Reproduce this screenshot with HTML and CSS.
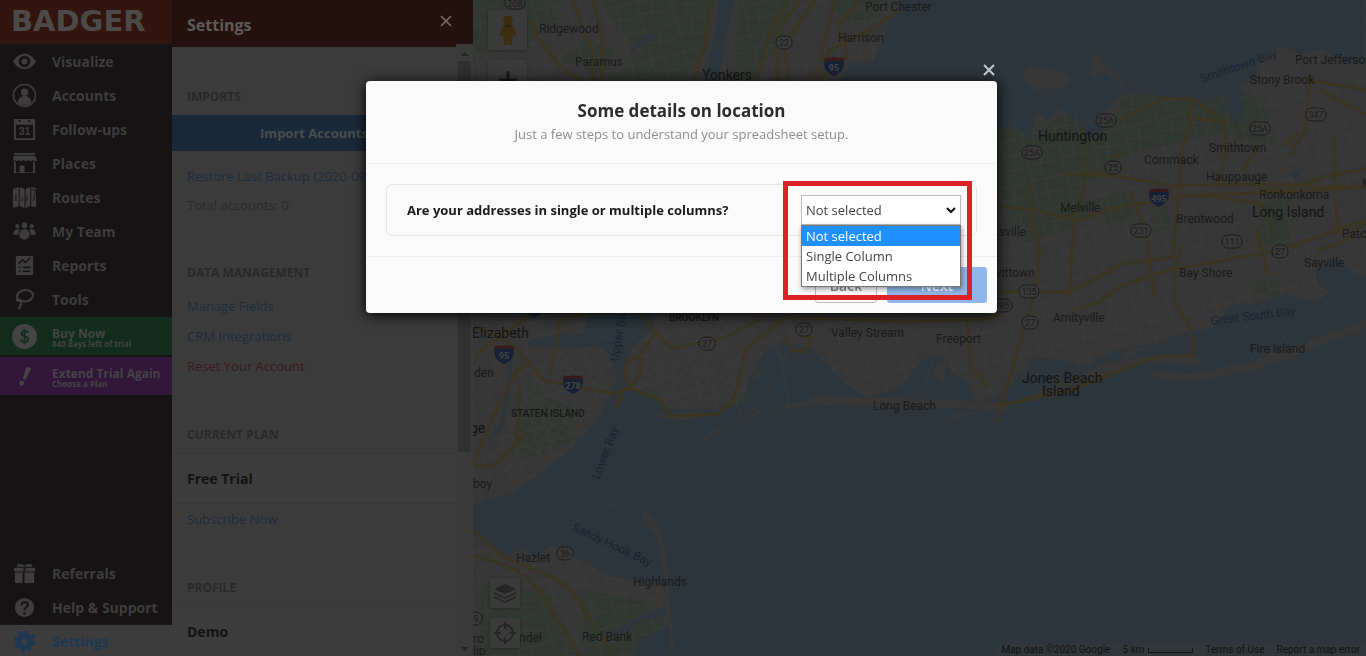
FILE: index.html
```html
<!DOCTYPE html>
<html lang="en">
<head>
    <meta charset="UTF-8">
    <meta name="viewport" content="width=device-width, initial-scale=1.0">
    <title>Badger - Settings</title>
    <link rel="stylesheet" href="styles.css">
</head>
<body>
    <div class="app">
        <nav class="sidebar">
            <a href="#" class="logo">BADGER</a>
            <div class="menu">
                <a href="#" class="menu-item">
                    <svg class="icon" viewBox="0 0 26 26"><path fill-rule="evenodd" d="M1 13C5 7 9 5 13 5s8 2 12 8c-4 6-8 8-12 8S5 19 1 13zm12-6a6 6 0 1 0 0 12 6 6 0 0 0 0-12zm0 3a3 3 0 1 1 0 6 3 3 0 0 1 0-6z"/></svg>
                    Visualize
                </a>
                <a href="#" class="menu-item">
                    <svg class="icon" viewBox="0 0 26 26"><circle cx="13" cy="13" r="11.5" fill="none" stroke="currentColor" stroke-width="1.6"/><circle cx="13" cy="9.500" r="3.800"/><path d="M6 21c0-5 3-7.500 7-7.500s7 2.500 7 7.500c-4 3-10 3-14 0z"/></svg>
                    Accounts
                </a>
                <a href="#" class="menu-item">
                    <svg class="icon" viewBox="0 0 26 26"><path fill-rule="evenodd" d="M2 2h22v22H2zM4 8v14h18V8zM7 3v2h2V3zm10 0v2h2V3z"/><text class="icon-date" x="13" y="19" text-anchor="middle">31</text></svg>
                    Follow-ups
                </a>
                <a href="#" class="menu-item">
                    <svg class="icon" viewBox="0 0 26 26"><path d="M2 2h22v2H2zM2 5h22l2 4c0 2-3 2-4 0-1 2-4 2-5 0-1 2-4 2-5 0-1 2-4 2-5 0-1 2-3 2-4 0-1 2-3 1-2 0zM2 11h2v11h4v-7h5v7h9V11h2v12H2z"/></svg>
                    Places
                </a>
                <a href="#" class="menu-item">
                    <svg class="icon" viewBox="0 0 26 26"><path d="M1 4l6-2v20l-6 2zM8 2l5 2v20l-5-2zM14 4l5-2v20l-5 2zM20 2l5 1v20l-5-1z"/><path d="M4 9v8M11 13l-1 4M16 11l-1 6M21 5h3v6l-2 6" fill="none" stroke="#171516"/></svg>
                    Routes
                </a>
                <a href="#" class="menu-item">
                    <svg class="icon" viewBox="0 0 26 26"><circle cx="13" cy="6.500" r="3"/><circle cx="5.500" cy="7.500" r="2.200"/><circle cx="20.500" cy="7.500" r="2.200"/><ellipse cx="13" cy="16" rx="5.500" ry="5.500"/><path d="M8 11c-4-1-7 1-6.500 5L6 17zM18 11c4-1 7 1 6.500 5L20 17z"/></svg>
                    My Team
                </a>
                <a href="#" class="menu-item">
                    <svg class="icon" viewBox="0 0 26 26"><rect x="4" y="3" width="18" height="20" rx="1"/><path d="M7 11l4-4 3 3 5-5M7 15h2m2 0h8M7 19h2m2 0h8" fill="none" stroke="#171516" stroke-width="1.700"/></svg>
                    Reports
                </a>
                <a href="#" class="menu-item">
                    <svg class="icon" viewBox="0 0 26 26"><path d="M9 14c-4-1-5-5-2-8s9-4 13-1 1 9-5 10c-3 .5-5-.5-6-1zm-3-3c-2 3 0 5 3 3 1 3 0 6-2 9" fill="none" stroke="currentColor" stroke-width="2.200"/></svg>
                    Tools
                </a>
            </div>
            <div class="offers">
                <a href="#" class="offer buy">
                    <svg class="icon" viewBox="0 0 26 26"><circle cx="13" cy="13" r="13"/><path d="M17 9c-1-2-7-2.500-7 .8 0 4 7 2 7 6 0 3.500-7 3.500-8 .4M13 5v16" fill="none" stroke="#122d1d" stroke-width="1.900"/></svg>
                    <span>Buy Now<small>840 days left of trial</small></span>
                </a>
                <a href="#" class="offer extend">
                    <svg class="icon" viewBox="0 0 26 26"><path d="M15 3l5 1.500-6 12-3-1zM10 17.500a2.500 2.500 0 1 1 0 5 2.500 2.500 0 0 1 0-5z"/></svg>
                    <span>Extend Trial Again<small>Choose a Plan</small></span>
                </a>
            </div>
            <div class="menu menu-bottom">
                <a href="#" class="menu-item">
                    <svg class="icon" viewBox="0 0 26 26"><path d="M2 7h10v4H2zM14 7h10v4H14zM3 12h8v11H3zM13 12h10v11H13zM5 6c0-4 5-4 8-1 3-3 8-3 8 1z"/></svg>
                    Referrals
                </a>
                <a href="#" class="menu-item">
                    <svg class="icon" viewBox="0 0 26 26"><circle cx="13" cy="13" r="10"/><path d="M10 11c0-5 7-4.500 6.500-.5C16 13 13 13 13 16M13 18v2.200" fill="none" stroke="#171516" stroke-width="2.200"/></svg>
                    Help &amp; Support
                </a>
                <a href="#" class="menu-item active">
                    <svg class="icon" viewBox="0 0 26 26"><circle cx="13" cy="13" r="6" fill="none" stroke="currentColor" stroke-width="5"/><circle cx="13" cy="13" r="9.500" fill="none" stroke="currentColor" stroke-width="4" stroke-dasharray="4 3.460"/></svg>
                    Settings
                </a>
            </div>
        </nav>

        <aside class="panel">
            <header class="panel-header">
                <h1>Settings</h1>
                <button type="button" class="panel-close" aria-label="Close settings">
                    <svg viewBox="0 0 12 12"><path d="M1 1l10 10M11 1L1 11"/></svg>
                </button>
            </header>
            <div class="panel-content">
                <h2 class="imports">Imports</h2>
                <button type="button" class="import">Import Accounts</button>
                <a href="#" class="link">Restore Last Backup (2020-09-01)</a>
                <p class="total">Total accounts: 0</p>
                <h2>Data Management</h2>
                <a href="#" class="link">Manage Fields</a>
                <a href="#" class="link">CRM Integrations</a>
                <a href="#" class="link danger">Reset Your Account</a>
                <h2>Current Plan</h2>
                <div class="row">Free Trial</div>
                <a href="#" class="link">Subscribe Now</a>
                <h2>Profile</h2>
                <div class="row">Demo</div>
            </div>
            <div class="scrollbar">
                <svg viewBox="0 0 8 5"><path d="M0 5l4-4 4 4z"/></svg>
                <div class="thumb"></div>
                <svg viewBox="0 0 8 5"><path d="M0 0l4 4 4-4z"/></svg>
            </div>
        </aside>

        <main class="map">
            <svg class="map-canvas" viewBox="473 0 893 656" preserveAspectRatio="xMinYMin slice">
                <defs>
                    <pattern id="streets" width="34" height="30" patternUnits="userSpaceOnUse" patternTransform="rotate(-14)">
                        <path d="M0 6h34M6 0v30M20 6l-3 24M6 18l28 4" class="street"/>
                    </pattern>
                    <pattern id="blocks" width="9" height="8" patternUnits="userSpaceOnUse" patternTransform="rotate(28)">
                        <path d="M0 3h9M3 0v8" class="street"/>
                    </pattern>
                    <g id="interstate">
                        <path d="M-9-7c3-2 6 1 9-1 3 2 6-1 9 1C12 2 7 7 0 10-7 7-12 2-9-7z" fill="#162136"/>
                        <path d="M-9-8c3-1 6 1 9-1 3 2 6 0 9 1l1 3h-20z" fill="#371b1c"/>
                    </g>
                </defs>
                <rect x="473" width="893" height="656" class="land"/>
                <!-- parks -->
                <g class="park">
                    <path d="M473 0h75l10 20-35 25-50 10zM600 0h115l-8 50-28 31h-65l30-30-22-20zM740 0h60l-20 40-26 40h-18zM830 0h60l-25 25-20-5zM560 60l25-20 30 10-10 25z"/>
                    <path d="M997 128l40 5 30-20 40 15 25-48 60 12 65 5-30 38-90 15-60 40-80-5z"/>
                    <path d="M1000 190l45-10 55 22-25 25-48 15zM1095 200l30-12 10 30-25 12zM1158 212l11-7v22l-11 5zM1262 208l22-10 8 48-32-1zM1260 278l25 4-10 15-20-6zM1240 90l25 20 10 35-35-5-20-35z"/>
                    <path d="M520 420l25-22 30 8-5 35-40 18-20-10zM525 390l10-8 8 14-12 4zM727 400l8-15 10 14-8 14-12 2zM580 590l60 10 28 25v30h-80zM480 585l70 10 30 60H480z"/>
                </g>
                <rect x="473" width="893" height="656" fill="url(#streets)"/>
                <path d="M630 313h130l-10 90-85 5-50-20z" fill="url(#blocks)"/>
                <path d="M550 352l35-3 25 38-40 50-60 40-20-20z" fill="url(#blocks)"/>
                <!-- water -->
                <g class="water">
                    <path d="M904 0l-12 15-8 22-10 24-24 3-10 17v30h157v19l18-4 15 14 6-28 12 8 13-12 14 12 10 22 18-12 2-20 14-15 35-1 30 8 25-2 16-6 8 15 2 18 8-15-4-26 16-6 3-22 23-12 20 8 22-5 20 14h20V0z"/>
                    <path d="M718 0h17l-10 40-6 41h-15l10-41zM630 48l20-16 6 4-24 16zM1220 105l10-6 8 8 3 12-8-2zM1290 174l6-4 4 3-4 8z"/>
                    <path d="M590 313h60l4 14-23 22-9 24 5 14 27 8 12 14 56 1 22-6 4-24 18-30 16-8 27 6 34 34 25 16 34-12 20-26 18-6 12 18 15 12 10 18 29-8 18-30 15-7 48 8 33-16 34-5 34-13 23-2 21-24 22-1 32-10 30 8 14-10-12-8-3-13 23-12 18 16 24 6 36-8 11-16v415H674l-3-56-8-30-23-6-28-3-38-20-22-12-16 13-14-11-18 12-14-12-17-12v-30l45-15 50-38 28-30 14-24 8-22-15-30-50 2-30-4 25-8 35-2z"/>
                    <path d="M610 635l20-14 20-10 20-6-3 10-28 6-16 14zM640 640l28-14 5 30h-38zM488 440l12-16 6-34 4-38 3 1-3 40-7 36-13 14z"/>
                </g>
                <!-- islands and barrier beaches -->
                <g class="land">
                    <path d="M1028 65l17 2 18 5 8 8-10 8-28 2-10-10zM1090 58l8-6 7 12 22 20-5 1-18-14-13 8z"/>
                    <path d="M700 442l10-10 60-22 50-14 135 4 55 3-2 7-60-2-130-2-60 4-50 28zM950 415l50-7 110-46 48-7 45 3-4 7-50-3-90 28-30 10-79 20zM1150 371l40 3 60-12 116-42v8l-108 42-68 12-32-3zM642 512l5-1 12 15 7 25 3 40 5 55-3 10-5-60-8-58-16-20zM650 415l50-4 15 4-35 6z"/>
                    <path d="M752 376l10-8-2 12zM780 358l8-5-2 12zM768 390l6-2v6zM1005 360l16-4 8 12-10 8zM1048 380l10-7 4 5-7 7zM1075 365l9-5-2 9zM1120 356l15-10 12 2-20 10zM990 378l14-5 8 11-14 10zM890 378l14-5-5 14zM930 370l18-10-5 25zM870 386l10-12 4 14z"/>
                </g>
                <g class="minor">
                    <path d="M773 325l8 35 8 45M845 335l7 40M850 395l40-65 30-17M722 375l24 49M497 360l-13 55M1192 350v20M1134 85l-30-25M925 385l20-60"/>
                    <path d="M473 85l80-70 60-15M480 60l60 18 60-62M640 81l40-50-12-31M760 40l38 41M1003 140l30 40 60-10 100 20 60-10M1180 110l20 60 60-20 60 20 46-10M1110 150l-10 60-20 60 10 50M1210 120l-30 130M1320 100l-10 200M1075 115l10 38 30 30M510 610l60-10 60 20 40-20M560 580l20 76M1260 310l40-80M1056 210l14 80 40 30"/>
                </g>
                <path d="M473 545l150-37 67-38 60 44M888 20l34 33 60-18 160-45M580 345l40-3" class="ferry"/>
                <!-- highways -->
                <g class="highway">
                    <path d="M528 20l15 25 20 25 20 11M572 0l20 52 1 29M593 0l10 40-2 41M710 0l-5 45-12 36M790 0l-18 25-15 56M800 0l-22 30v51M815 0l-30 45 3 36M860 0l-22 25 10 30-30 26M900 10l-30 20-40 20-20 31M835 0l-15 60"/>
                    <path d="M473 325l40 20 30 35 70 14 17-6 30 12 10 16 48-2 16-15 12-50 40-32 120 5 80-3 16-6M630 388l-6-18 6-14 12 4-2 14-10 14M473 356l60-43M473 465l18-44 25-49 15-11M473 466h20l25-23 8-11M516 443l4-60M550 375l10-55 30-8M640 313l15 20 17 15 50-9 45-23M800 335l12 3-9 14-12-2-5-15M966 313l6 55 15 18M657 330l-20 30M625 388l-10 20"/>
                    <path d="M1120 120l45-22 30 2 30 21M1189 97v30l-8 25-4 62-5 43-52 8-30 17-20 10H997M1194 118l30 4 2 30-10 35M1283 147l15-15M1258 145l-15 25M1258 188l30 3 35-14 43-8M1070 176l55-8M1110 160l12-7M1083 127v67l-9 20-5 85M1063 174h20l40 3 50 9 80-2 113 3M997 205l40 5 40 10 40-13 80-12 90-3 79-5M1130 190l15 40 10 68M1028 182l5 45 7 20-5 45-30 100-8 30M1075 310l25-8 20-16 50-16 110-20 86-30M1182 245l-8 25v30l14 25 5 15v16h-35l-90 35-71 15M1200 195l60 8 15 35M1256 230l12 45M1318 250l25-8 23-22M1310 80l55 10M1310 75l-5 55-15 25M1335 135v60l3 40M1320 90l46 25"/>
                    <path d="M473 530l30 27 50 20 20 15 22 35 20 29M473 556l20 5 25 10 20 18 42 67"/>
                </g>
                <!-- shields -->
                <g class="shield">
                    <rect x="505" y="-4" width="20" height="13" rx="6"/><text x="515" y="7">208</text>
                    <rect x="776" y="36" width="16" height="13" rx="6"/><text x="784" y="46">22</text>
                    <rect x="1096" y="114" width="20" height="13" rx="6"/><text x="1106" y="124">25A</text>
                    <rect x="1022" y="146" width="20" height="13" rx="6"/><text x="1032" y="156">25A</text>
                    <rect x="1250" y="122" width="20" height="13" rx="6"/><text x="1260" y="132">25A</text>
                    <rect x="1306" y="108" width="20" height="13" rx="6"/><text x="1316" y="118">347</text>
                    <rect x="1105" y="161" width="16" height="13" rx="6"/><text x="1113" y="171">25</text>
                    <rect x="1131" y="224" width="20" height="13" rx="6"/><text x="1141" y="234">231</text>
                    <rect x="1222" y="235" width="20" height="13" rx="6"/><text x="1232" y="245">111</text>
                    <rect x="1272" y="245" width="16" height="13" rx="6"/><text x="1280" y="255">27</text>
                    <rect x="1019" y="285" width="20" height="13" rx="6"/><text x="1029" y="295">135</text>
                    <rect x="992" y="299" width="20" height="13" rx="6"/><text x="1002" y="309">105</text>
                    <rect x="1022" y="316" width="16" height="13" rx="6"/><text x="1030" y="326">27</text>
                    <rect x="796" y="323" width="16" height="13" rx="6"/><text x="804" y="333">27</text>
                    <rect x="699" y="337" width="16" height="13" rx="6"/><text x="707" y="347">27</text>
                    <rect x="557" y="547" width="16" height="13" rx="6"/><text x="565" y="557">36</text>
                    <rect x="466" y="612" width="16" height="13" rx="6"/><text x="476" y="622">9</text>
                </g>
                <g class="interstate">
                    <use href="#interstate" x="834" y="66"/><text x="834" y="71">95</text>
                    <use href="#interstate" x="504" y="354"/><text x="504" y="359">95</text>
                    <use href="#interstate" x="573" y="384"/><text x="573" y="389">278</text>
                    <use href="#interstate" x="1159" y="197"/><text x="1159" y="202">495</text>
                    <use href="#interstate" x="534" y="308"/>
                </g>
                <!-- places -->
                <g class="place">
                    <text x="539" y="33">Ridgewood</text>
                    <text x="575" y="66">Paramus</text>
                    <text x="865" y="11">Port Chester</text>
                    <text x="838" y="42">Harrison</text>
                    <text x="1295" y="64">Port Jefferson</text>
                    <text x="1250" y="84">Stony Brook</text>
                    <text x="1209" y="152">Smithtown</text>
                    <text x="1144" y="164">Commack</text>
                    <text x="1206" y="181">Hauppauge</text>
                    <text x="1259" y="199">Ronkonkoma</text>
                    <text x="1362" y="188">Medford</text>
                    <text x="1060" y="212">Melville</text>
                    <text x="1176" y="223">Brentwood</text>
                    <text x="1342" y="238">Patchogue</text>
                    <text x="975" y="236">Hicksville</text>
                    <text x="983" y="277">Levittown</text>
                    <text x="1179" y="277">Bay Shore</text>
                    <text x="1304" y="267">Sayville</text>
                    <text x="1053" y="322">Amityville</text>
                    <text x="1250" y="353">Fire Island</text>
                    <text x="831" y="337">Valley Stream</text>
                    <text x="936" y="343">Freeport</text>
                    <text x="873" y="410">Long Beach</text>
                    <text x="474" y="377">den</text>
                    <text x="473" y="488">boy</text>
                    <text x="516" y="562">Hazlet</text>
                    <text x="633" y="586">Highlands</text>
                    <text x="582" y="641">Red Bank</text>
                    <text x="519" y="642">ndel</text>
                    <text x="473" y="643">ro</text>
                    <text x="473" y="655">lip</text>
                </g>
                <g class="city">
                    <text x="702" y="80">Yonkers</text>
                    <text x="1038" y="141">Huntington</text>
                    <text x="1252" y="217">Long Island</text>
                    <text x="1022" y="383">Jones Beach</text>
                    <text x="1042" y="396">Island</text>
                    <text x="472" y="338">Elizabeth</text>
                    <text x="470" y="433">ge</text>
                </g>
                <g class="borough">
                    <text x="669" y="321">BROOKLYN</text>
                    <text x="511" y="417">STATEN ISLAND</text>
                </g>
                <g class="bay">
                    <text transform="translate(1202 83) rotate(-19)">Smithtown Bay</text>
                    <text transform="translate(1211 325) rotate(-7)">Great South Bay</text>
                    <text transform="translate(618 362) rotate(-80)">Upper Bay</text>
                    <text transform="translate(599 480) rotate(-69)">Lower Bay</text>
                    <text transform="translate(571 530) rotate(25)">Sandy Hook Bay</text>
                </g>
            </svg>
            <div class="map-tools top-tools">
                <button type="button" class="map-button" aria-label="Street View">
                    <svg viewBox="0 0 20 32"><circle cx="10" cy="5.500" r="5"/><path d="M5 10h10l4 11-3 1-1-3-1 12h-3.500l-.5-9-.5 9H6L5 19l-1 3-3-1z"/><path d="M6 10h8l-4 3z" fill="#2c220c"/></svg>
                </button>
                <button type="button" class="map-button zoom-in" aria-label="Zoom in">
                    <svg viewBox="0 0 18 18"><path d="M9 0v18M0 9h18"/></svg>
                </button>
            </div>
            <div class="map-tools bottom-tools">
                <button type="button" class="map-button" aria-label="Layers">
                    <svg viewBox="0 0 22 20"><path d="M11 1l11 5-11 5L0 6zM0 9l11 5 11-5v2l-11 5-11-5zM0 13l11 5 11-5v2l-11 5-11-5z"/></svg>
                </button>
                <button type="button" class="map-button" aria-label="My location">
                    <svg viewBox="0 0 22 22"><circle cx="11" cy="11" r="8" fill="none" stroke="currentColor" stroke-width="2"/><path d="M10 0h2v7h-2zM10 15h2v7h-2zM0 10h7v2H0zM15 10h7v2h-7z"/></svg>
                </button>
            </div>
            <footer class="map-footer">
                <span>Map data ©2020 Google</span>
                <span class="scale">5 km <i></i></span>
                <a href="#">Terms of Use</a>
                <a href="#">Report a map error</a>
            </footer>
        </main>
    </div>

    <div class="overlay">
        <div class="modal" role="dialog" aria-labelledby="modal-title">
            <button type="button" class="modal-close" aria-label="Close">
                <svg viewBox="0 0 12 12"><path d="M1 1l10 10M11 1L1 11"/></svg>
            </button>
            <header class="modal-header">
                <h2 id="modal-title">Some details on location</h2>
                <p>Just a few steps to understand your spreadsheet setup.</p>
            </header>
            <div class="modal-body">
                <div class="question">
                    <label for="columns">Are your addresses in single or multiple columns?</label>
                    <div class="select-box">
                        <select id="columns">
                            <option>Not selected</option>
                            <option>Single Column</option>
                            <option>Multiple Columns</option>
                        </select>
                        <svg class="chevron" viewBox="0 0 10 7"><path d="M1 1l4 4 4-4"/></svg>
                        <ul class="options">
                            <li class="selected">Not selected</li>
                            <li>Single Column</li>
                            <li>Multiple Columns</li>
                        </ul>
                        <div class="highlight"></div>
                    </div>
                </div>
            </div>
            <footer class="modal-footer">
                <button type="button" class="back">Back</button>
                <button type="button" class="next">Next</button>
            </footer>
        </div>
    </div>
</body>
</html>
```
FILE: styles.css
```css
* {
    box-sizing: border-box;
}
body {
    margin: 0;
    font-family: "Open Sans", "Noto Sans", sans-serif;
    font-size: 13px;
    background-color: #2b353b;
    overflow: hidden;
}
a {
    text-decoration: none;
}
button {
    font-family: inherit;
    cursor: pointer;
}
.app {
    display: flex;
    height: 100vh;
}

/* Sidebar */
.sidebar {
    display: flex;
    flex-direction: column;
    flex-shrink: 0;
    width: 172px;
    background-color: #151314;
    overflow: hidden;
}
.logo {
    flex-shrink: 0;
    height: 44px;
    padding-left: 11px;
    background-color: #32150f;
    color: #4c4a49;
    font-family: "DejaVu Sans", sans-serif;
    font-size: 29px;
    font-weight: bold;
    line-height: 42px;
}
.menu {
    padding-top: 1px;
}
.menu-item {
    display: flex;
    align-items: center;
    gap: 15px;
    height: 34px;
    padding-left: 12px;
    border-bottom: 1px solid #181617;
    color: #3e3c3c;
    font-size: 14px;
    font-weight: bold;
}
.menu-item.active {
    background-color: #3c3c3c;
    color: #1d3854;
}
.icon {
    flex-shrink: 0;
    width: 25px;
    height: 25px;
    fill: currentColor;
}
.icon-date {
    font-family: "Liberation Sans", sans-serif;
    font-size: 11px;
}
.offers {
    display: flex;
    flex-direction: column;
    gap: 2px;
}
.offer {
    display: flex;
    align-items: center;
    gap: 15px;
    height: 38px;
    padding-left: 12px;
    color: #444;
    font-size: 12px;
    font-weight: bold;
    line-height: 12px;
}
.offer span {
    padding-top: 3px;
    white-space: nowrap;
}
.offer small {
    display: block;
    font-size: 8px;
    line-height: 8px;
}
.buy {
    background-color: #122d1d;
}
.extend {
    background-color: #32173b;
}
.menu-bottom {
    margin-top: auto;
    margin-bottom: -3px;
}

/* Settings panel */
.panel {
    display: grid;
    grid-template-columns: 1fr 17px;
    grid-template-rows: 44px 1fr;
    flex-shrink: 0;
    width: 301px;
    background-color: #3b3b3b;
    overflow: hidden;
}
.panel-header {
    grid-column: 1 / 3;
    display: flex;
    justify-content: space-between;
    align-items: center;
    padding: 6px 21px 0 15px;
    background-color: #24110d;
}
.panel-header h1 {
    margin: 0;
    color: #5e5a59;
    font-size: 16px;
}
.panel-close {
    display: flex;
    padding: 0 0 8px;
    border: 0;
    background: none;
}
.panel-close svg {
    width: 12px;
    height: 12px;
    stroke: #77716f;
    stroke-width: 1.5;
}
.panel-content {
    border-top: 3px solid #24110d;
    overflow: hidden;
}
.panel-content h2 {
    margin: 45px 15px 9px;
    color: #292929;
    font-size: 12px;
    line-height: 18px;
    text-transform: uppercase;
}
.panel-content .imports {
    margin-top: 41px;
}
.import {
    display: block;
    width: 100%;
    height: 36px;
    margin-bottom: 10px;
    border: 0;
    background-color: #1a2939;
    color: #484c50;
    font-size: 13px;
    font-weight: bold;
}
.link {
    display: block;
    padding: 0 15px;
    color: #1d2d3f;
    line-height: 30px;
    white-space: nowrap;
}
.danger {
    color: #3a1a1a;
}
.total {
    margin: 0 15px;
    color: #2a2a2a;
    line-height: 28px;
}
.row {
    height: 51px;
    padding-left: 15px;
    border-top: 1px solid #373737;
    border-bottom: 1px solid #373737;
    background-color: #3c3c3c;
    color: #131313;
    font-size: 14px;
    font-weight: bold;
    line-height: 50px;
}
.scrollbar {
    display: flex;
    flex-direction: column;
    align-items: center;
    padding: 7px 0 4px;
    background-color: #3a3a3a;
}
.scrollbar svg {
    width: 8px;
    height: 5px;
    fill: #242424;
}
.thumb {
    width: 13px;
    height: 65%;
    margin: 5px 0 auto;
    background-color: #303030;
}

/* Map */
.map {
    position: relative;
    flex: 1;
    overflow: hidden;
    font-family: Roboto, sans-serif;
}
.map-canvas {
    display: block;
    width: 100%;
    height: 100%;
}
.land {
    fill: #363636;
}
.park {
    fill: #303730;
}
.water {
    fill: #2b353b;
}
.street,
.minor {
    fill: none;
    stroke: #3a3a3a;
    stroke-width: 1;
}
.ferry {
    fill: none;
    stroke: #252e34;
    stroke-dasharray: 2 2;
}
.highway {
    fill: none;
    stroke: #3a3421;
    stroke-width: 3;
    stroke-linejoin: round;
}
.shield rect {
    fill: #383838;
    stroke: #1c1c1c;
}
.shield text,
.interstate text {
    fill: #1c1c1c;
    font-size: 9px;
    text-anchor: middle;
}
.interstate text {
    fill: #444;
    font-weight: bold;
}
.place {
    fill: #1b1b1b;
    font-size: 12px;
}
.city {
    fill: #141414;
    font-size: 14px;
}
.borough {
    fill: #181818;
    font-size: 10px;
    font-weight: 500;
}
.bay {
    fill: #1a2636;
    font-size: 12px;
}
.map-tools {
    position: absolute;
    display: flex;
    flex-direction: column;
    gap: 10px;
}
.top-tools {
    top: 10px;
    left: 15px;
}
.bottom-tools {
    left: 17px;
    bottom: 8px;
}
.map-button {
    display: flex;
    justify-content: center;
    align-items: center;
    width: 30px;
    height: 30px;
    padding: 0;
    border: 0;
    border-radius: 2px;
    background-color: #3a3a3a;
    color: #262626;
    box-shadow: 0 1px 3px #262626;
}
.map-button svg {
    width: 22px;
    height: 22px;
    fill: currentColor;
}
.top-tools .map-button {
    width: 39px;
    height: 40px;
    color: #3b2d0f;
}
.top-tools .map-button svg {
    height: 31px;
}
.top-tools .zoom-in svg {
    width: 18px;
    height: 18px;
    stroke: #181818;
    stroke-width: 3;
}
.map-footer {
    position: absolute;
    right: 0;
    bottom: 0;
    display: flex;
    gap: 12px;
    padding: 0 6px;
    background-color: #30373a;
    color: #141414;
    font-size: 10px;
    line-height: 12px;
}
.map-footer a {
    color: inherit;
}
.scale {
    display: flex;
    gap: 4px;
}
.scale i {
    width: 45px;
    height: 5px;
    margin-top: 4px;
    border: 1px solid #141414;
    border-top: 0;
}

/* Modal */
.overlay {
    position: fixed;
    inset: 0;
    display: flex;
    justify-content: center;
    align-items: flex-start;
    padding: 81px 3px 0 0;
}
.modal {
    position: relative;
    width: 631px;
    border-radius: 4px;
    background-color: #fafafa;
    box-shadow: 0 2px 14px #000;
}
.modal-close {
    position: absolute;
    top: -17px;
    right: 2px;
    display: flex;
    padding: 0;
    border: 0;
    background: none;
}
.modal-close svg {
    width: 12px;
    height: 12px;
    stroke: #c4c8ca;
    stroke-width: 2;
}
.modal-header {
    padding: 18px 20px;
    border-bottom: 1px solid #eee;
    text-align: center;
}
.modal-header h2 {
    margin: 0;
    color: #2c2c2c;
    font-size: 17px;
    font-weight: bold;
    line-height: 24px;
}
.modal-header p {
    margin: 0;
    color: #8e8e8e;
    font-size: 13px;
    line-height: 22px;
}
.modal-body {
    padding: 20px;
}
.question {
    display: flex;
    justify-content: space-between;
    align-items: center;
    height: 52px;
    padding: 0 15px 0 20px;
    border: 1px solid #e9e3e4;
    border-radius: 6px;
}
.question label {
    color: #1a1a1a;
    font-size: 13px;
    font-weight: bold;
}
.select-box {
    position: relative;
    width: 160px;
    color: #444;
}
.select-box select {
    display: block;
    width: 100%;
    height: 30px;
    padding: 0 4px;
    border: 1px solid #bbb;
    border-radius: 0;
    background-color: #fff;
    color: inherit;
    font-family: inherit;
    font-size: 13px;
    appearance: none;
}
.chevron {
    position: absolute;
    top: 12px;
    right: 5px;
    width: 10px;
    height: 7px;
    fill: none;
    stroke: #111;
    stroke-width: 2;
}
.options {
    position: absolute;
    top: 30px;
    left: 0;
    z-index: 1;
    width: 100%;
    margin: 0;
    padding: 0;
    border: 1px solid #777;
    background-color: #fff;
    box-shadow: 1px 2px 5px rgba(0, 0, 0, 0.4);
    font-size: 13px;
    line-height: 20px;
    list-style: none;
}
.options li {
    padding-left: 4px;
}
.options .selected {
    background-color: #1e90ff;
    color: #fff;
}
.highlight {
    position: absolute;
    inset: -14px -11px -75px -18px;
    border: 5px solid #dc2127;
}
.modal-footer {
    display: flex;
    justify-content: flex-end;
    gap: 10px;
    padding: 10px;
    border-top: 1px solid #eee;
}
.modal-footer button {
    height: 36px;
    border-radius: 3px;
    font-size: 14px;
    font-weight: 600;
}
.back {
    width: 62px;
    border: 1px solid #c5b9be;
    background-color: #fafafa;
    color: #888;
}
.next {
    width: 100px;
    border: 0;
    background-color: #8fb7e9;
    color: #fff;
}
```
